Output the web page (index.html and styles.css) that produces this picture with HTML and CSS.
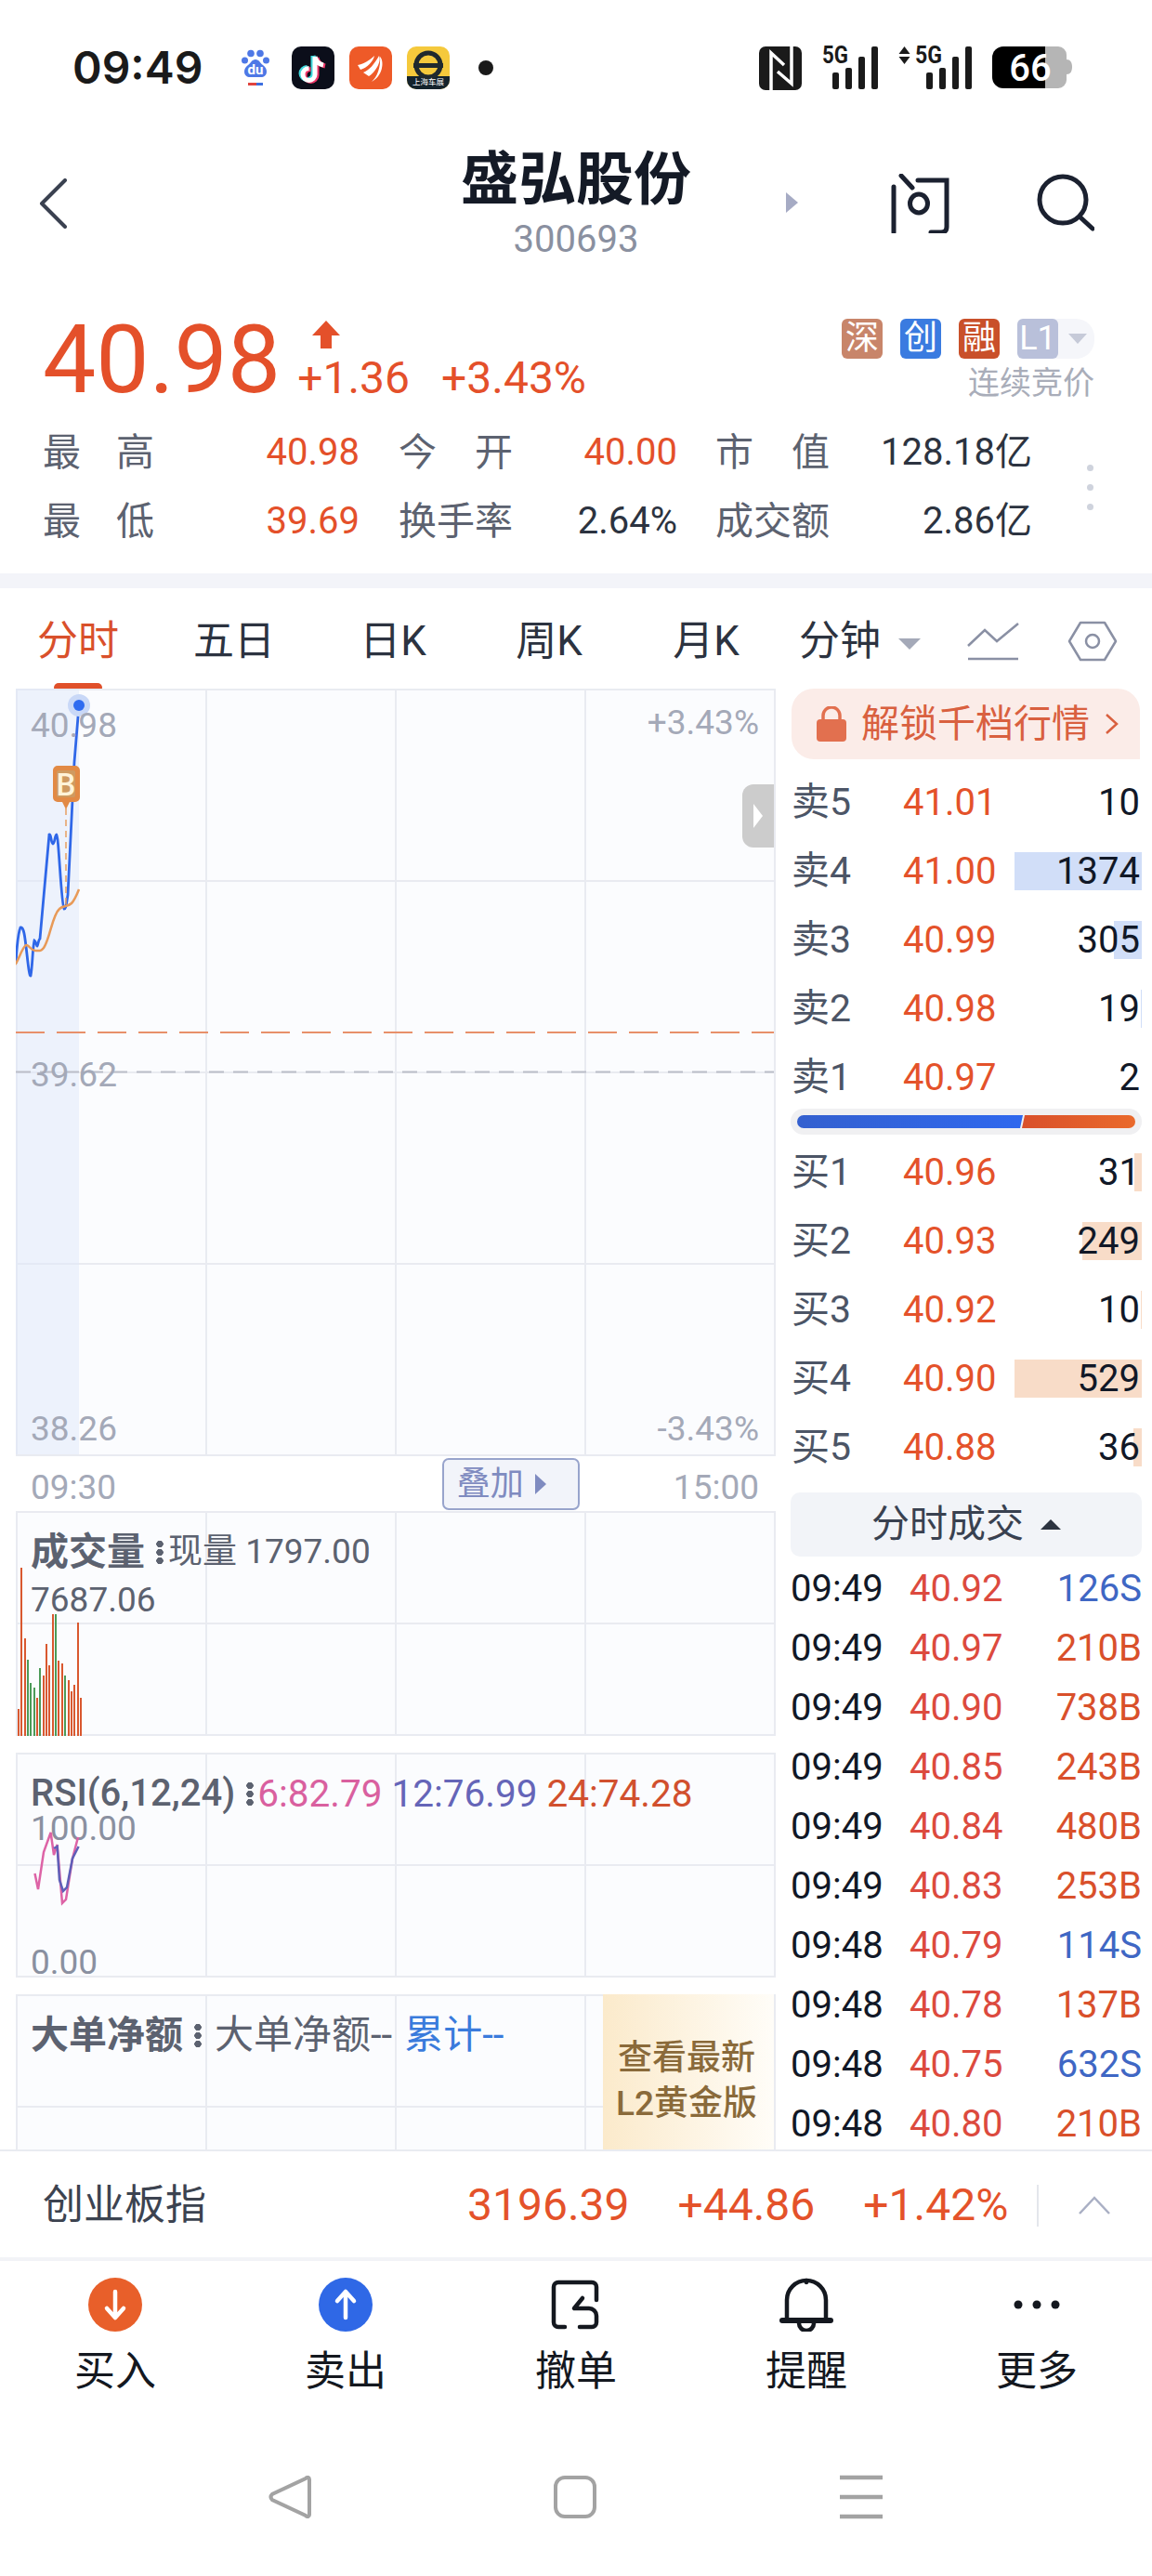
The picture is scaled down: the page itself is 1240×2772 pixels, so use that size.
FILE: index.html
```html
<!DOCTYPE html>
<html lang="zh-CN">
<head>
    <meta charset="UTF-8">
    <meta name="viewport" content="width=device-width, initial-scale=1.0">
    <title>盛弘股份 300693</title>
    <link rel="stylesheet" href="styles.css">
</head>
<body>
    <div class="status">
        <span class="clock">09:49</span>
        <svg class="app-baidu" width="30" height="40" viewBox="0 0 30 40">
            <circle cx="10" cy="4.500" r="3.800" fill="#4e78e6"/>
            <circle cx="20" cy="4.500" r="3.800" fill="#4e78e6"/>
            <circle cx="3.500" cy="12" r="3.500" fill="#4e78e6"/>
            <circle cx="26.500" cy="12" r="3.500" fill="#4e78e6"/>
            <path d="M15 11c-4 0-5 4-8 6-3 2-4 5-4 7 0 4 3 6 6 6h12c3 0 6-2 6-6 0-2-1-5-4-7-3-2-4-6-8-6z" fill="#4e78e6"/>
            <text x="15" y="27" text-anchor="middle" class="app-text" font-size="15" font-weight="700" fill="#fff">du</text>
            <rect x="7" y="36" width="9" height="3" fill="#e0443e"/>
            <rect x="16" y="36" width="7" height="3" fill="#3d6fe0"/>
        </svg>
        <svg class="app" width="46" height="46" viewBox="0 0 46 46">
            <rect width="46" height="46" rx="10" fill="#0b0e1a"/>
            <path d="M25 11v19a6.500 6.500 0 1 1-6.500-6.500M25 11c1 5 4 8 9 9" fill="none" stroke="#3fd8dc" stroke-width="5" transform="translate(-2 -1)"/>
            <path d="M25 11v19a6.500 6.500 0 1 1-6.500-6.500M25 11c1 5 4 8 9 9" fill="none" stroke="#f0386a" stroke-width="5" transform="translate(2 1)"/>
            <path d="M25 11v19a6.500 6.500 0 1 1-6.500-6.500M25 11c1 5 4 8 9 9" fill="none" stroke="#fff" stroke-width="5"/>
        </svg>
        <svg class="app" width="46" height="46" viewBox="0 0 46 46">
            <rect width="46" height="46" rx="10" fill="#ee5a28"/>
            <path d="M9 20c6-1 13-5 18-10-1 6-8 13-15 15zM15 28c6-2 12-9 17-18 3 6-4 18-11 22zM24 38c6-5 10-16 9-27 5 5 3 21-9 27z" fill="#fff"/>
        </svg>
        <svg class="app" width="46" height="46" viewBox="0 0 46 46">
            <rect width="46" height="46" rx="10" fill="#f5c93c"/>
            <path d="M0 32h46v4a10 10 0 0 1-10 10H10A10 10 0 0 1 0 36z" fill="#14232c"/>
            <circle cx="23" cy="20" r="13" fill="none" stroke="#20292e" stroke-width="5"/>
            <rect x="7" y="18" width="32" height="5" fill="#20292e"/>
            <text x="23" y="41" text-anchor="middle" class="app-text" font-size="8.500" fill="#fff">上海车展</text>
        </svg>
        <i class="status-dot"></i>
        <div class="status-right">
            <svg width="46" height="47" viewBox="0 0 46 47">
                <rect width="46" height="47" rx="7" fill="#1a1a1a"/>
                <path d="M13 47V7L27 20M35 0V40L20 27" fill="none" stroke="#fff" stroke-width="3.500"/>
            </svg>
            <svg width="60" height="67" viewBox="0 -10 60 67">
                <text x="0" y="19" class="app-text" font-size="25" font-weight="700" fill="#1a1a1a" textLength="28" lengthAdjust="spacingAndGlyphs">5G</text>
                <rect x="11" y="29" width="7" height="18" rx="2" fill="#1a1a1a"/>
                <rect x="25" y="24" width="7" height="23" rx="2" fill="#1a1a1a"/>
                <rect x="39" y="12" width="7" height="35" rx="2" fill="#1a1a1a"/>
                <rect x="53" y="1" width="7" height="46" rx="2" fill="#1a1a1a"/>
            </svg>
            <svg width="79" height="67" viewBox="0 -10 79 67">
                <path d="M6.500 1l6 8H.500zM.500 12h12l-6 8z" fill="#1a1a1a"/>
                <text x="18" y="19" class="app-text" font-size="25" font-weight="700" fill="#1a1a1a" textLength="29" lengthAdjust="spacingAndGlyphs">5G</text>
                <rect x="30" y="29" width="7" height="18" rx="2" fill="#1a1a1a"/>
                <rect x="44" y="24" width="7" height="23" rx="2" fill="#1a1a1a"/>
                <rect x="58" y="12" width="7" height="35" rx="2" fill="#1a1a1a"/>
                <rect x="72" y="1" width="7" height="46" rx="2" fill="#1a1a1a"/>
            </svg>
            <svg width="86" height="65" viewBox="0 -10 86 65">
                <path d="M12 0h45v45H12A12 12 0 0 1 0 33V12A12 12 0 0 1 12 0z" fill="#000"/>
                <path d="M57 0h14a9 9 0 0 1 9 9v5c4 0 6 3 6 8s-2 8-6 8v6a9 9 0 0 1-9 9H57z" fill="#b5b5b5"/>
                <text x="41" y="37" text-anchor="middle" class="app-text" font-size="40" font-weight="500" fill="#fff">66</text>
            </svg>
        </div>
    </div>

    <header class="head">
        <div class="head-side">
            <svg class="back" width="30" height="54" viewBox="0 0 30 54"><path d="M28 2L3 27l25 25" fill="none" stroke="#3a4150" stroke-width="4" stroke-linecap="round" stroke-linejoin="round"/></svg>
        </div>
        <div class="head-title">
            <h1>盛弘股份</h1>
            <div class="code">300693</div>
        </div>
        <div class="head-side head-tools">
            <svg class="next" width="13" height="22" viewBox="0 0 13 22"><path d="M0 0l13 11L0 22z" fill="#a6abc4"/></svg>
            <svg class="ask" width="64" height="64" viewBox="0 0 64 64">
                <path d="M4 14v49M12 2l12 13M30 7h31v50c0 4-2 6-6 6h-11" fill="none" stroke="#1b2130" stroke-width="5" stroke-linecap="round"/>
                <ellipse cx="31" cy="32" rx="9.500" ry="10" fill="none" stroke="#1b2130" stroke-width="5"/>
            </svg>
            <svg class="find" width="62" height="62" viewBox="0 0 62 62">
                <circle cx="28" cy="28" r="25" fill="none" stroke="#1b2130" stroke-width="5"/>
                <path d="M47 47l13 12" stroke="#1b2130" stroke-width="5" stroke-linecap="round"/>
            </svg>
        </div>
    </header>

    <section class="quote">
        <div class="price-row">
            <div class="price">40.98</div>
            <div class="change">
                <svg class="change-arrow" width="30" height="36" viewBox="0 0 30 36"><path d="M15 0l15 16H21v14H9V16H0z" fill="#e4502a"/></svg>
                <div class="change-values"><span>+1.36</span><span>+3.43%</span></div>
            </div>
            <div class="market-state">
                <div class="tags">
                    <span class="tag tag-shen">深</span>
                    <span class="tag tag-chuang">创</span>
                    <span class="tag tag-rong">融</span>
                    <span class="tag-pill"><span class="tag tag-l1">L1</span><i class="tag-caret"></i></span>
                </div>
                <div class="state-text">连续竞价</div>
            </div>
        </div>
        <div class="stats">
            <span class="stat-label spread"><b>最</b><b>高</b></span><span class="stat-value up">40.98</span>
            <span class="stat-label spread"><b>今</b><b>开</b></span><span class="stat-value up">40.00</span>
            <span class="stat-label spread"><b>市</b><b>值</b></span><span class="stat-value">128.18亿</span>
            <span class="stat-more"><i></i><i></i><i></i></span>
            <span class="stat-label spread"><b>最</b><b>低</b></span><span class="stat-value up">39.69</span>
            <span class="stat-label">换手率</span><span class="stat-value">2.64%</span>
            <span class="stat-label">成交额</span><span class="stat-value">2.86亿</span>
        </div>
    </section>

    <nav class="tabs">
        <span class="tab active">分时</span>
        <span class="tab">五日</span>
        <span class="tab">日K</span>
        <span class="tab">周K</span>
        <span class="tab">月K</span>
        <span class="tab tab-minute">分钟<i class="tab-caret"></i></span>
        <svg class="tab-icon" width="58" height="44" viewBox="0 0 58 44">
            <path d="M2 27L20 10l13 12L56 3" fill="none" stroke="#8a90a4" stroke-width="2.500"/>
            <path d="M2 41h54" stroke="#8a90a4" stroke-width="2.500"/>
        </svg>
        <svg class="tab-icon-hex" width="54" height="46" viewBox="0 0 54 46">
            <path d="M14 3h26l12 20-12 20H14L2 23z" fill="none" stroke="#8a90a4" stroke-width="2.500" stroke-linejoin="round"/>
            <circle cx="27" cy="23" r="7" fill="none" stroke="#8a90a4" stroke-width="2.500"/>
        </svg>
    </nav>

    <main class="market">
        <div class="charts">
            <div class="panel panel-main">
                <svg class="plot" width="818" height="826" viewBox="17 741 818 826">
                    <rect x="17" y="741" width="68" height="826" fill="#dfe8f9" opacity=".5"/>
                    <path d="M17 1111H833" stroke="#e8906a" stroke-width="2" stroke-dasharray="31 13"/>
                    <path d="M17 1153.500H833" stroke="#bbbec8" stroke-width="2" stroke-dasharray="16 10"/>
                    <path d="M17 1037C18 1020 19 1005 22 998 26 997 27 1010 29 1027 31 1045 32 1051 33 1050 35 1040 35 1020 37 1012 39 1013 39 1018 40 1018 41 1017 41 1012 43 1010L53 898C55 897 55 908 57 908 59 908 59 898 61 898 63 898 66 975 69 978 71 978 71 975 73 963L80 820 85 759" fill="none" stroke="#2f67e8" stroke-width="2.800"/>
                    <path d="M71 870V975" stroke="#e8a060" stroke-width="1.500" stroke-dasharray="7 5"/>
                    <path d="M16 1038C19 1036 24 1019 28 1017 32 1017 33 1023 38 1023 42 1023 44 1024 47 1020 54 1010 56 985 64 978 68 974 73 976 77 972 80 969 83 962 85 957" fill="none" stroke="#e89a58" stroke-width="2.500"/>
                    <circle cx="85" cy="759" r="12" fill="#c9d8f7"/>
                    <circle cx="85" cy="759" r="6" fill="#2f6bf0"/>
                    <path d="M62 824h19a5 5 0 0 1 5 5v29a5 5 0 0 1-5 5h-6l-4 8-4-8h-5a5 5 0 0 1-5-5v-29a5 5 0 0 1 5-5z" fill="#e28a45"/>
                    <rect x="61" y="829" width="20" height="29" rx="2" fill="#cf9a60"/>
                    <text x="71" y="856" text-anchor="middle" class="app-text" font-size="33" font-weight="500" fill="#fff3d8">B</text>
                </svg>
                <span class="axis axis-left" id="axis-high">40.98</span>
                <span class="axis axis-left" id="axis-mid">39.62</span>
                <span class="axis axis-left" id="axis-low">38.26</span>
                <span class="axis axis-right" id="axis-up">+3.43%</span>
                <span class="axis axis-right" id="axis-down">-3.43%</span>
                <div class="side-handle"><i></i></div>
            </div>

            <div class="time-axis">
                <span>09:30</span>
                <button class="overlay-btn" type="button">叠加<i></i></button>
                <span>15:00</span>
            </div>

            <div class="panel panel-sub">
                <div class="sub-title"><b>成交量</b><i class="dots"></i><span>现量 1797.00</span></div>
                <div class="sub-line">7687.06</div>
                <div class="bars">
                    <i class="bar-up" style="height:29px"></i><i class="bar-up" style="height:181px"></i><i class="bar-up" style="height:105px"></i><i class="bar-down" style="height:82px"></i><i class="bar-down" style="height:57px"></i><i class="bar-down" style="height:52px"></i><i class="bar-up" style="height:41px"></i><i class="bar-down" style="height:73px"></i><i class="bar-up" style="height:65px"></i><i class="bar-up" style="height:99px"></i><i class="bar-up" style="height:76px"></i><i class="bar-up" style="height:131px"></i><i class="bar-down" style="height:131px"></i><i class="bar-up" style="height:81px"></i><i class="bar-up" style="height:78px"></i><i class="bar-down" style="height:65px"></i><i class="bar-up" style="height:60px"></i><i class="bar-up" style="height:48px"></i><i class="bar-up" style="height:55px"></i><i class="bar-up" style="height:122px"></i><i class="bar-up" style="height:41px"></i>
                </div>
            </div>

            <div class="panel panel-sub panel-rsi">
                <div class="sub-title"><b>RSI(6,12,24)</b><i class="dots"></i><span class="rsi-a">6:82.79</span><span class="rsi-b">12:76.99</span><span class="rsi-c">24:74.28</span></div>
                <span class="rsi-scale" id="rsi-top">100.00</span>
                <span class="rsi-scale" id="rsi-bottom">0.00</span>
                <svg class="plot" width="818" height="242" viewBox="17 1886 818 242">
                    <path d="M37.500 2016L41 2033 47 1993 54.600 1972 58 1996 61.600 1985 67 2048 71 2044 78 2000 84 1977" fill="none" stroke="#dd63a6" stroke-width="2.500"/>
                    <path d="M58 1989L61.600 1987 64 2023 68 2035 72 2031 78 2000 84.600 1987" fill="none" stroke="#5f5fb8" stroke-width="2.500"/>
                </svg>
            </div>

            <div class="panel panel-sub panel-big">
                <div class="sub-title"><b>大单净额</b><i class="dots"></i><span>大单净额--</span><span class="net-total">累计--</span></div>
                <div class="gold-box">查看最新<br>L2黄金版</div>
            </div>
        </div>

        <aside class="book">
            <div class="unlock">
                <svg width="32" height="38" viewBox="0 0 32 38">
                    <path d="M7 17V10a9 9 0 0 1 18 0v7" fill="none" stroke="#e2704f" stroke-width="3.500"/>
                    <rect y="14" width="32" height="24" rx="4" fill="#e2704f"/>
                </svg>
                <span>解锁千档行情</span>
                <svg width="15" height="24" viewBox="0 0 15 24"><path d="M2 2l11 10L2 22" fill="none" stroke="#d9603f" stroke-width="2.500"/></svg>
            </div>

            <div class="book-side">
                <div class="row"><span class="row-name">卖5</span><span class="row-price">41.01</span><span class="row-qty">10</span></div>
                <div class="row"><span class="row-name">卖4</span><span class="row-price">41.00</span><span class="row-qty"><i class="fill-sell" style="width:137px"></i>1374</span></div>
                <div class="row"><span class="row-name">卖3</span><span class="row-price">40.99</span><span class="row-qty"><i class="fill-sell" style="width:30px"></i>305</span></div>
                <div class="row"><span class="row-name">卖2</span><span class="row-price">40.98</span><span class="row-qty"><i class="fill-sell" style="width:1px"></i>19</span></div>
                <div class="row"><span class="row-name">卖1</span><span class="row-price">40.97</span><span class="row-qty">2</span></div>
            </div>

            <div class="ratio"><i class="ratio-buy"></i><i class="ratio-sell"></i></div>

            <div class="row"><span class="row-name">买1</span><span class="row-price">40.96</span><span class="row-qty"><i class="fill-buy" style="width:8px"></i>31</span></div>
            <div class="row"><span class="row-name">买2</span><span class="row-price">40.93</span><span class="row-qty"><i class="fill-buy" style="width:64px"></i>249</span></div>
            <div class="row"><span class="row-name">买3</span><span class="row-price">40.92</span><span class="row-qty"><i class="fill-buy" style="width:1px"></i>10</span></div>
            <div class="row"><span class="row-name">买4</span><span class="row-price">40.90</span><span class="row-qty"><i class="fill-buy" style="width:137px"></i>529</span></div>
            <div class="row"><span class="row-name">买5</span><span class="row-price">40.88</span><span class="row-qty"><i class="fill-buy" style="width:9px"></i>36</span></div>

            <div class="trades-head">分时成交<i></i></div>

            <div class="trade"><span>09:49</span><span class="t-price">40.92</span><span class="t-sell">126S</span></div>
            <div class="trade"><span>09:49</span><span class="t-price">40.97</span><span class="t-buy">210B</span></div>
            <div class="trade"><span>09:49</span><span class="t-price">40.90</span><span class="t-buy">738B</span></div>
            <div class="trade"><span>09:49</span><span class="t-price">40.85</span><span class="t-buy">243B</span></div>
            <div class="trade"><span>09:49</span><span class="t-price">40.84</span><span class="t-buy">480B</span></div>
            <div class="trade"><span>09:49</span><span class="t-price">40.83</span><span class="t-buy">253B</span></div>
            <div class="trade"><span>09:48</span><span class="t-price">40.79</span><span class="t-sell">114S</span></div>
            <div class="trade"><span>09:48</span><span class="t-price">40.78</span><span class="t-buy">137B</span></div>
            <div class="trade"><span>09:48</span><span class="t-price">40.75</span><span class="t-sell">632S</span></div>
            <div class="trade"><span>09:48</span><span class="t-price">40.80</span><span class="t-buy">210B</span></div>
        </aside>
    </main>

    <section class="index-bar">
        <span class="index-name">创业板指</span>
        <span class="index-value">3196.39</span>
        <span class="index-value">+44.86</span>
        <span class="index-value">+1.42%</span>
        <i class="index-divider"></i>
        <svg width="36" height="20" viewBox="0 0 36 20"><path d="M2 19L18 2l16 17" fill="none" stroke="#a9afc4" stroke-width="2.500"/></svg>
    </section>

    <footer class="actions">
        <div class="action">
            <svg width="58" height="58" viewBox="0 0 58 58">
                <circle cx="29" cy="29" r="29" fill="#e85f2a"/>
                <path d="M29 15v27M20 33l9 10 9-10" fill="none" stroke="#fff" stroke-width="4.500" stroke-linecap="round" stroke-linejoin="round"/>
            </svg>
            <span>买入</span>
        </div>
        <div class="action">
            <svg width="58" height="58" viewBox="0 0 58 58">
                <circle cx="29" cy="29" r="29" fill="#2f68e6"/>
                <path d="M29 43V16M20 25l9-10 9 10" fill="none" stroke="#fff" stroke-width="4.500" stroke-linecap="round" stroke-linejoin="round"/>
            </svg>
            <span>卖出</span>
        </div>
        <div class="action">
            <svg width="58" height="58" viewBox="0 0 58 58">
                <path d="M17 53H10a5 5 0 0 1-5-5V10a5 5 0 0 1 5-5h36a5 5 0 0 1 5 5v14" fill="none" stroke="#14181f" stroke-width="4.500" stroke-linecap="round"/>
                <path d="M36 22L27 33h16a8 8 0 0 1 8 8v7a5 5 0 0 1-5 5H33" fill="none" stroke="#14181f" stroke-width="4.500" stroke-linecap="round" stroke-linejoin="round"/>
            </svg>
            <span>撤单</span>
        </div>
        <div class="action">
            <svg width="58" height="58" viewBox="0 0 58 58">
                <path d="M8 46V24a21 21 0 0 1 42 0v22" fill="none" stroke="#14181f" stroke-width="4.500"/>
                <path d="M3 46h52" stroke="#14181f" stroke-width="6" stroke-linecap="round"/>
                <path d="M21 49a8 8 0 0 0 16 0M29 3v2" fill="none" stroke="#14181f" stroke-width="4.500" stroke-linecap="round"/>
            </svg>
            <span>提醒</span>
        </div>
        <div class="action">
            <svg width="58" height="58" viewBox="0 0 58 58">
                <circle cx="9" cy="29" r="4.500" fill="#14181f"/>
                <circle cx="29" cy="29" r="4.500" fill="#14181f"/>
                <circle cx="49" cy="29" r="4.500" fill="#14181f"/>
            </svg>
            <span>更多</span>
        </div>
    </footer>

    <div class="system-nav">
        <svg width="46" height="46" viewBox="0 0 46 46"><path d="M44 4c0-2-2-3-4-1L4 20c-2 2-2 4 0 6l36 17c2 2 4 1 4-1z" fill="none" stroke="#a3a3a3" stroke-width="4"/></svg>
        <svg width="46" height="46" viewBox="0 0 46 46"><rect x="2" y="2" width="42" height="42" rx="10" fill="none" stroke="#a3a3a3" stroke-width="4"/></svg>
        <svg width="48" height="48" viewBox="0 0 48 48"><path d="M1 3h46M1 24h46M1 45h46" stroke="#a3a3a3" stroke-width="4.500"/></svg>
    </div>
</body>
</html>
```

FILE: styles.css
```css
* {
    box-sizing: border-box;
}

body {
    margin: 0;
    width: 1240px;
    height: 2772px;
    overflow: hidden;
    background-color: #fff;
    color: #111827;
    font-family: Roboto, "Noto Sans CJK SC", sans-serif;
}

i {
    font-style: normal;
}

.app-text {
    font-family: Roboto, "Noto Sans CJK SC", sans-serif;
}

/* status bar */
.status {
    display: flex;
    align-items: center;
    height: 146px;
    padding: 0 86px 0 78px;
}

.clock {
    width: 140px;
    font-family: Inter, sans-serif;
    font-size: 48px;
    font-weight: 600;
    line-height: 60px;
    color: #1a1a1a;
    white-space: nowrap;
}

.app-baidu {
    margin-left: 42px;
    margin-right: 24px;
}

.app {
    margin-right: 16px;
}

.status-dot {
    width: 16px;
    height: 16px;
    margin-left: 15px;
    border-radius: 50%;
    background-color: #1a1a1a;
}

.status-right {
    display: flex;
    align-items: center;
    gap: 22px;
    margin-left: auto;
}

.status-right svg:nth-child(n+2) {
    margin-top: -1px;
}

/* title row */
.head {
    display: grid;
    grid-template-columns: 1fr 260px 1fr;
    height: 144px;
    padding-top: 12px;
}

.head-side {
    display: flex;
    align-items: flex-start;
}

.back {
    margin: 34px 0 0 42px;
}

.head-title {
    text-align: center;
}

.head-title h1 {
    margin: 0;
    font-size: 62px;
    font-weight: 700;
    line-height: 72px;
    color: #141a26;
}

.code {
    margin-top: -1px;
    font-size: 40px;
    line-height: 58px;
    color: #8a90a0;
}

.next {
    margin: 49px 0 0 96px;
}

.ask {
    margin: 29px 0 0 99px;
}

.find {
    margin: 29px 0 0 94px;
}

/* price block */
.quote {
    height: 343px;
    padding-top: 50px;
    border-bottom: 16px solid #f3f4f9;
}

.price-row {
    display: flex;
    align-items: flex-start;
    height: 110px;
    padding: 0 62px 0 46px;
}

.price {
    margin-top: 2px;
    font-size: 102px;
    line-height: 90px;
    color: #e4502a;
}

.change {
    margin-left: 18px;
}

.change-arrow {
    display: block;
    margin: 5px 0 0 16px;
}

.change-values {
    display: flex;
    gap: 34px;
    font-size: 48px;
    line-height: 52px;
    color: #e4502a;
    white-space: nowrap;
}

.market-state {
    display: flex;
    flex-direction: column;
    align-items: flex-end;
    margin-left: auto;
    padding-top: 3px;
}

.tags {
    display: flex;
    align-items: center;
    gap: 19px;
}

.tag {
    display: flex;
    align-items: center;
    justify-content: center;
    width: 44px;
    height: 43px;
    border-radius: 6px;
    font-size: 36px;
    line-height: 43px;
    color: #fff;
}

.tag-shen {
    background-color: #c8856a;
}

.tag-chuang {
    background-color: #3a7be0;
}

.tag-rong {
    background-color: #c9502a;
}

.tag-l1 {
    background-color: #b9c0da;
}

.tag-pill {
    display: flex;
    align-items: center;
    width: 83px;
    height: 43px;
    border-radius: 20px;
    background-color: #f5f6fa;
}

.tag-caret {
    width: 0;
    height: 0;
    margin-left: 11px;
    border-top: 11px solid #c6cad8;
    border-left: 10px solid transparent;
    border-right: 10px solid transparent;
}

.state-text {
    margin-top: 3px;
    font-size: 34px;
    line-height: 46px;
    color: #a9adb9;
}

.stats {
    display: grid;
    grid-template-columns: 120px 221px 165px 177px 164px 218px 66px;
    grid-auto-rows: 74px;
    padding-left: 46px;
    align-items: center;
}

.stat-label {
    justify-self: end;
    width: 123px;
    font-size: 41px;
    line-height: 74px;
    color: #5c6270;
    white-space: nowrap;
}

.stat-label:nth-child(1),
.stat-label:nth-child(8) {
    justify-self: start;
    width: 120px;
}

.spread {
    display: flex;
    justify-content: space-between;
}

.spread b {
    font-weight: 400;
}

.stat-value {
    font-size: 40px;
    line-height: 74px;
    text-align: right;
    color: #2c3340;
    white-space: nowrap;
}

.stat-value.up {
    color: #e4502a;
}

.stat-more {
    display: flex;
    flex-direction: column;
    justify-self: end;
    align-self: start;
    gap: 14px;
    grid-column: 7;
    grid-row: 1 / 3;
    margin-top: 50px;
}

.stat-more i {
    width: 7px;
    height: 7px;
    border-radius: 50%;
    background-color: #cfd3dd;
}

/* chart tabs */
.tabs {
    display: flex;
    align-items: center;
    height: 108px;
    padding-top: 6px;
}

.tab {
    position: relative;
    flex: none;
    font-size: 44px;
    line-height: 60px;
    text-align: center;
    color: #2c3340;
}

.tab:nth-child(1),
.tab:nth-child(2) {
    width: 168px;
}

.tab:nth-child(3) {
    width: 174px;
}

.tab:nth-child(4) {
    width: 162px;
}

.tab:nth-child(5) {
    width: 176px;
}

.tab.active {
    color: #d9502b;
}

.tab.active::after {
    content: "";
    position: absolute;
    left: 58px;
    bottom: -25px;
    width: 52px;
    height: 10px;
    border-radius: 5px;
    background-color: #e0502a;
}

.tab-minute {
    display: flex;
    align-items: center;
    margin-left: 12px;
}

.tab-caret {
    width: 0;
    height: 0;
    margin: 6px 0 0 19px;
    border-top: 12px solid #a4a9b8;
    border-left: 12px solid transparent;
    border-right: 12px solid transparent;
}

.tab-icon {
    margin-left: 49px;
}

.tab-icon-hex {
    margin-left: 51px;
}

/* charts and order book */
.market {
    display: flex;
    height: 1572px;
    overflow: hidden;
}

.charts {
    flex: none;
    width: 834px;
    margin-left: 17px;
}

.panel {
    position: relative;
    overflow: hidden;
    background-color: #fbfcfe;
    background-image: linear-gradient(#e9ebf1 2px, transparent 2px), linear-gradient(90deg, #e9ebf1 2px, transparent 2px);
    border-right: 2px solid #e9ebf1;
}

.panel-main {
    width: 818px;
    height: 826px;
    background-size: 204px 206px;
    border-bottom: 2px solid #e9ebf1;
}

.plot {
    position: absolute;
    left: 0;
    top: 0;
}

.axis {
    position: absolute;
    font-size: 37px;
    line-height: 40px;
    color: #a4a9b8;
}

.axis-left {
    left: 16px;
}

.axis-right {
    right: 16px;
}

#axis-high {
    top: 20px;
}

#axis-mid {
    top: 396px;
}

#axis-low {
    top: 777px;
}

#axis-up {
    top: 17px;
}

#axis-down {
    top: 777px;
}

.side-handle {
    position: absolute;
    right: 0;
    top: 103px;
    display: flex;
    align-items: center;
    justify-content: center;
    width: 34px;
    height: 68px;
    border-radius: 12px 0 0 12px;
    background-color: #cccccc;
}

.side-handle i {
    width: 0;
    height: 0;
    border-left: 10px solid #fff;
    border-top: 13px solid transparent;
    border-bottom: 13px solid transparent;
}

.time-axis {
    display: flex;
    align-items: flex-start;
    width: 818px;
    height: 59px;
    padding: 0 18px 0 16px;
    font-size: 37px;
    line-height: 40px;
    color: #a4a9b8;
}

.time-axis span {
    margin-top: 14px;
}

.overlay-btn {
    display: flex;
    align-items: center;
    width: 148px;
    height: 56px;
    margin: 2px 101px 0 auto;
    padding: 0 0 0 14px;
    border: 2px solid #98a4cc;
    border-radius: 7px;
    background-color: #f2f4fa;
    color: #7f8bc0;
    font-family: inherit;
    font-size: 36px;
    line-height: 50px;
}

.overlay-btn i {
    width: 0;
    height: 0;
    margin-left: 12px;
    border-left: 12px solid #7f8bc0;
    border-top: 11px solid transparent;
    border-bottom: 11px solid transparent;
}

.panel-sub {
    width: 818px;
    height: 242px;
    margin-bottom: 18px;
    padding: 18px 0 0 16px;
    background-size: 204px 120px;
}

.sub-title {
    position: relative;
    display: flex;
    align-items: center;
    height: 52px;
    font-size: 37px;
    line-height: 42px;
    color: #5c6270;
    white-space: nowrap;
}

.sub-title b {
    font-size: 41px;
    font-weight: 700;
}

.dots {
    flex: none;
    width: 8px;
    height: 27px;
    margin: 0 5px 0 12px;
    background: radial-gradient(circle, #5c6270 3.500px, transparent 4px) 0 0 / 8px 9px;
}

.sub-line {
    position: relative;
    font-size: 37px;
    line-height: 52px;
    color: #5c6270;
}

.bars {
    position: absolute;
    left: 2px;
    bottom: 0;
    display: flex;
    align-items: flex-end;
    gap: 1.350px;
}

.bars i {
    width: 2px;
}

.bar-up {
    background-color: #d9582f;
}

.bar-down {
    background-color: #4c9b58;
}

.panel-rsi {
    overflow: visible;
}

.panel-rsi .sub-title {
    font-size: 40.500px;
}

.panel-rsi .sub-title b {
    font-size: 40px;
    font-weight: 500;
}

.panel-rsi .dots {
    margin-right: 4px;
}

.rsi-a {
    color: #d9609f;
}

.rsi-b {
    margin-left: 10px;
    color: #6565b8;
}

.rsi-c {
    margin-left: 10px;
    color: #d1502e;
}

.rsi-scale {
    position: absolute;
    left: 16px;
    font-size: 37px;
    line-height: 32px;
    color: #8a90a0;
}

#rsi-top {
    top: 66px;
}

#rsi-bottom {
    top: 210px;
}

.panel-big .sub-title {
    font-size: 42px;
}

.panel-big .dots {
    margin: 0 14px 0 12px;
}

.net-total {
    margin-left: 13px;
    color: #3a7bdc;
}

.gold-box {
    position: absolute;
    right: 0;
    top: 0;
    width: 184px;
    height: 100%;
    padding: 44px 4px 0 0;
    background: linear-gradient(90deg, #fbeacb, #fffdf8);
    font-size: 37px;
    font-weight: 500;
    line-height: 49px;
    text-align: center;
    color: #8a6a3a;
}

.book {
    flex: none;
    width: 378px;
}

.unlock {
    display: flex;
    align-items: center;
    width: 375px;
    height: 76px;
    margin-left: 1px;
    padding-left: 27px;
    border-radius: 24px 24px 0 24px;
    background-color: #fbece8;
    font-size: 41px;
    line-height: 76px;
    color: #d9603f;
}

.unlock span {
    margin-left: 16px;
    white-space: nowrap;
}

.unlock svg:last-child {
    margin-left: 16px;
}

.book-side {
    margin-top: 9px;
}

.row {
    display: grid;
    grid-template-columns: 121px 100px 1fr;
    align-items: center;
    height: 74px;
    font-size: 40px;
    line-height: 41px;
}

.row-name {
    padding-left: 1px;
    font-size: 41px;
    color: #4c5566;
}

.row-price {
    color: #e4522a;
}

.row-qty {
    position: relative;
    z-index: 0;
    height: 41px;
    padding-right: 2px;
    text-align: right;
}

.fill-sell,
.fill-buy {
    position: absolute;
    right: 0;
    top: 0;
    z-index: -1;
    height: 41px;
}

.fill-sell {
    background-color: #d1def8;
}

.fill-buy {
    background-color: #f8dcc8;
}

.ratio {
    display: flex;
    align-items: center;
    width: 378px;
    height: 28px;
    margin: -3px 0 3px;
    padding: 0 7px;
    border-radius: 14px;
    background-color: #f0f0f2;
}

.ratio-buy {
    width: 243px;
    height: 14px;
    border-radius: 7px 0 0 7px;
    background: linear-gradient(90deg, #3460cf, #2f68ee);
    clip-path: polygon(0 0, 100% 0, calc(100% - 3px) 100%, 0 100%);
}

.ratio-sell {
    flex: 1;
    height: 14px;
    margin-left: -1px;
    border-radius: 0 7px 7px 0;
    background: linear-gradient(90deg, #d9502b, #ea6a2c);
    clip-path: polygon(3px 0, 100% 0, 100% 100%, 0 100%);
}

.trades-head {
    display: flex;
    align-items: center;
    justify-content: center;
    width: 378px;
    height: 69px;
    margin: 12px 0 3px;
    padding-bottom: 1px;
    border-radius: 10px;
    background-color: #f2f4f8;
    font-size: 41px;
    line-height: 60px;
    color: #394150;
}

.trades-head i {
    width: 0;
    height: 0;
    margin-left: 18px;
    border-bottom: 11px solid #2c3340;
    border-left: 11px solid transparent;
    border-right: 11px solid transparent;
}

.trade {
    display: grid;
    grid-template-columns: 128px 1fr auto;
    align-items: center;
    height: 64px;
    font-size: 40px;
    line-height: 44px;
}

.t-price {
    color: #dc4a3e;
}

.t-sell {
    color: #3f67c4;
}

.t-buy {
    color: #d9502b;
}

/* bottom bars */
.index-bar {
    display: flex;
    align-items: center;
    height: 120px;
    padding: 2px 0 0 46px;
    border-top: 2px solid #e9ebf1;
    border-bottom: 4px solid #f2f3f7;
    font-size: 48px;
    line-height: 60px;
}

.index-name {
    width: 457px;
    font-size: 44px;
    color: #3c4350;
}

.index-value {
    margin-right: 52px;
    color: #e4522a;
}

.index-value:nth-child(4) {
    margin-right: 31px;
}

.index-divider {
    width: 2px;
    height: 45px;
    margin-right: 42px;
    background-color: #e4e6ec;
}

.actions {
    display: flex;
    height: 170px;
    padding-top: 18px;
}

.action {
    display: flex;
    flex-direction: column;
    align-items: center;
    width: 248px;
    font-size: 44px;
    line-height: 60px;
    color: #14181f;
}

.action span {
    margin-top: 13px;
}

.system-nav {
    display: flex;
    justify-content: center;
    align-items: center;
    gap: 261px;
    height: 54px;
    margin-top: 57px;
}
```
